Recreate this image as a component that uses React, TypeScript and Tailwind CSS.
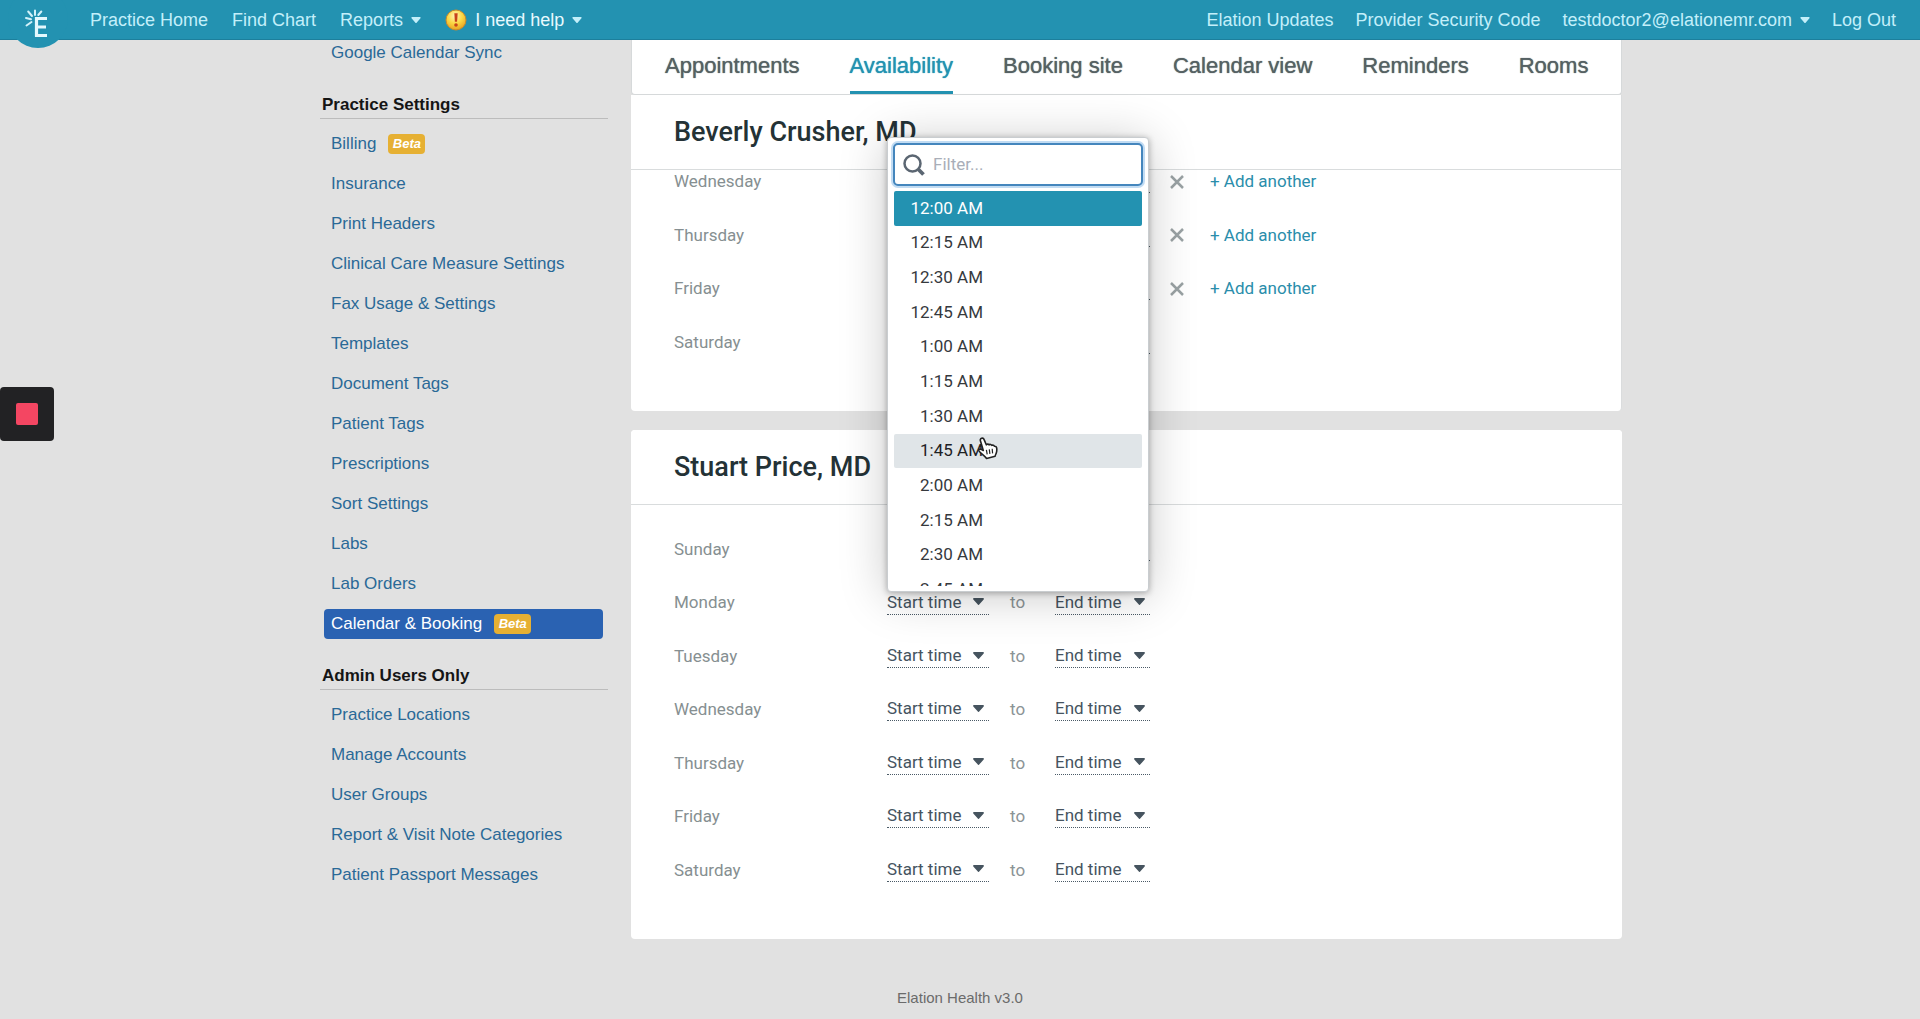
import React from "react";

const HELV = "font-['Liberation_Sans',Arial,sans-serif]";

const practiceLinks = [
  { label: "Billing", beta: true },
  { label: "Insurance" },
  { label: "Print Headers" },
  { label: "Clinical Care Measure Settings" },
  { label: "Fax Usage & Settings" },
  { label: "Templates" },
  { label: "Document Tags" },
  { label: "Patient Tags" },
  { label: "Prescriptions" },
  { label: "Sort Settings" },
  { label: "Labs" },
  { label: "Lab Orders" },
  { label: "Calendar & Booking", beta: true, active: true },
];

const adminLinks = [
  { label: "Practice Locations" },
  { label: "Manage Accounts" },
  { label: "User Groups" },
  { label: "Report & Visit Note Categories" },
  { label: "Patient Passport Messages" },
];

const tabs = ["Appointments", "Availability", "Booking site", "Calendar view", "Reminders", "Rooms"];

const times = [
  "12:00 AM", "12:15 AM", "12:30 AM", "12:45 AM",
  "1:00 AM", "1:15 AM", "1:30 AM", "1:45 AM",
  "2:00 AM", "2:15 AM", "2:30 AM", "2:45 AM",
];

function Caret({ className }: { className: string }) {
  return (
    <svg viewBox="0 0 11 7" className={className} fill="currentColor" aria-hidden="true">
      <path d="M.9 0h9.2c.7 0 1.1.8.6 1.4L6.2 6.6a.9.9 0 0 1-1.4 0L.3 1.4C-.2.8.2 0 .9 0z" />
    </svg>
  );
}

function Logo() {
  return (
    <a href="#" aria-label="Elation" className="absolute -top-3 left-2 block h-[60px] w-[60px] rounded-full bg-[#2392b1]">
      <svg viewBox="8 -12 60 60" className="h-full w-full" aria-hidden="true">
        <path d="M36.500 17v19.500M35 18.500h12M35 27h11M35 35.500h12" stroke="#e4f8fd" strokeWidth="3.200" fill="none" />
        <path
          d="M35 15v-4.500M38.300 15l3-3.500M32 16l-3.800-4.500M31 19.200l-5-1.200M31.500 22l-5 3.500"
          stroke="#d3f2fa"
          strokeWidth="2"
          strokeLinecap="round"
        />
      </svg>
    </a>
  );
}

function AlertBall() {
  return (
    <svg viewBox="0 0 22 22" className="h-[22px] w-[22px]" aria-hidden="true">
      <defs>
        <radialGradient id="ball" cx="45%" cy="30%" r="75%">
          <stop offset="0" stopColor="#fff6b8" />
          <stop offset="0.5" stopColor="#fbd743" />
          <stop offset="1" stopColor="#e59a1c" />
        </radialGradient>
      </defs>
      <circle cx="11" cy="11" r="10" fill="url(#ball)" stroke="#c98a2b" />
      <path d="M9.300 4.200h3.400l-.6 8.600H9.900z" fill="#c8431b" />
      <circle cx="11" cy="16" r="1.800" fill="#c8431b" />
    </svg>
  );
}

function TopBar() {
  return (
    <header
      className={`${HELV} fixed inset-x-0 top-0 z-30 flex h-10 items-center justify-between border-b border-[#1c7f9c] bg-[#2392b1] pt-px pr-6 pl-[90px] text-[18px] text-[#c3effa]`}
    >
      <Logo />
      <nav className="flex items-center gap-6" aria-label="Main">
        <a href="#">Practice Home</a>
        <a href="#">Find Chart</a>
        <button className="flex items-center gap-2">
          Reports <Caret className="h-1.5 w-2.5" />
        </button>
        <button className="flex items-center gap-2 text-[#e8fafe]">
          <AlertBall /> I need help <Caret className="h-1.5 w-2.5 text-[#c3effa]" />
        </button>
      </nav>
      <nav className="flex items-center gap-[22px]" aria-label="Account">
        <a href="#">Elation Updates</a>
        <a href="#">Provider Security Code</a>
        <button className="flex items-center gap-2">
          testdoctor2@elationemr.com <Caret className="h-1.5 w-2.5" />
        </button>
        <a href="#">Log Out</a>
      </nav>
    </header>
  );
}

function SideLink({ label, beta, active }: { label: string; beta?: boolean; active?: boolean }) {
  return (
    <li className="flex h-10 items-center">
      <a
        href="#"
        className={
          active
            ? "mr-[5px] ml-1 flex h-[30px] flex-1 items-center gap-3 rounded-[4px] bg-[#2a62b2] pl-[7px] text-white"
            : "ml-1 flex h-[30px] items-center gap-3 pl-[7px]"
        }
      >
        {label}
        {beta && (
          <span className="flex h-5 w-[37px] items-center justify-center rounded-[4px] bg-[#e6b033] text-[13px] font-bold text-white italic">
            Beta
          </span>
        )}
      </a>
    </li>
  );
}

function SideHeading({ children }: { children: React.ReactNode }) {
  return (
    <h2 className="mt-[19px] mb-[5px] border-b border-[#bcbcbc] pl-0.5 text-[17px] leading-[26px] font-bold text-[#151515]">
      {children}
    </h2>
  );
}

function Sidebar() {
  return (
    <aside className={`${HELV} w-72 shrink-0 text-[17px] text-[#2a6997]`}>
      <ul>
        <SideLink label="Google Calendar Sync" />
      </ul>
      <SideHeading>Practice Settings</SideHeading>
      <ul>
        {practiceLinks.map((l) => (
          <SideLink key={l.label} {...l} />
        ))}
      </ul>
      <SideHeading>Admin Users Only</SideHeading>
      <ul>
        {adminLinks.map((l) => (
          <SideLink key={l.label} {...l} />
        ))}
      </ul>
    </aside>
  );
}

function TimeSelect({ label, name, className }: { label: string; name: string; className: string }) {
  return (
    <span className={`relative flex items-center border-b border-dotted border-[#4a5a66] pb-0.5 text-[#46545f] ${className}`}>
      <select aria-label={name} className="w-full cursor-pointer appearance-none bg-transparent leading-5 outline-none">
        <option>{label}</option>
      </select>
      <Caret className="pointer-events-none absolute right-[5px] h-[7px] w-[11px]" />
    </span>
  );
}

function DayRow({ day, owner, filled }: { day: string; owner: string; filled?: boolean }) {
  return (
    <li className="flex items-center">
      <span className="w-[213px] text-[#868f91]">{day}</span>
      <TimeSelect label="Start time" name={`${owner} ${day} start`} className="w-[102px]" />
      <span className="w-[66px] pl-[21px] text-[#8b9496]">to</span>
      <TimeSelect label="End time" name={`${owner} ${day} end`} className="w-[95px]" />
      {filled && (
        <>
          <button aria-label={`Remove ${day} hours`} className="ml-5 text-[#9aa2a4]">
            <svg viewBox="0 0 14 14" className="h-3.5 w-3.5" stroke="currentColor" strokeWidth="2.500" aria-hidden="true">
              <path d="M1 1l12 12M13 1L1 13" />
            </svg>
          </button>
          <button className="ml-[26px] text-[#2a8dab]">+ Add another</button>
        </>
      )}
    </li>
  );
}

function ProviderTitle({ children }: { children: React.ReactNode }) {
  return (
    <h3 className="relative border-b border-[#d9dcdd] bg-white px-[43px] py-5 text-[27px] leading-[34px] font-medium text-[#243236]">
      {children}
    </h3>
  );
}

function TimeMenu() {
  return (
    <div className="absolute top-[104px] left-64 z-10 w-[262px] rounded-[4px] border border-[#c9cdd0] bg-white px-[5px] pt-[5px] pb-[5px] shadow-[0_4px_48px_rgba(0,0,0,0.22),0_1px_6px_rgba(0,0,0,0.3)]">
      <label className="flex h-[43px] items-center gap-2 rounded-[5px] border-2 border-[#4586bd] bg-white pl-2 shadow-[0_0_0_2px_#c2dcf3]">
        <svg viewBox="0 0 22 22" className="h-[22px] w-[22px] shrink-0" fill="none" stroke="#5b6672" strokeWidth="2.500" aria-hidden="true">
          <circle cx="9.500" cy="9.500" r="8" />
          <path d="M15.500 15.500l5 5" strokeWidth="3.800" />
        </svg>
        <input
          type="text"
          aria-label="Filter times"
          placeholder="Filter..."
          className="w-full min-w-0 bg-transparent text-[17px] text-[#333b44] outline-none placeholder:text-[#a9aeb8]"
        />
      </label>
      <div className="mx-px mt-[5px] h-[395px] overflow-hidden">
        <ul role="listbox" aria-label="Start time" className="grid min-h-[416px] auto-rows-fr text-[17px] text-[#36393d]">
          {times.map((t) => (
            <li
              key={t}
              role="option"
              aria-selected={t === "12:00 AM"}
              className={
                t === "12:00 AM"
                  ? "flex items-center rounded-[2px] bg-[#2392b1] pl-4 text-white"
                  : t === "1:45 AM"
                    ? "flex items-center rounded-[2px] bg-[#e0e5e8] pl-4 text-[#1e2124]"
                    : "flex items-center pl-4"
              }
            >
              <span className="w-[73px] text-right">{t}</span>
            </li>
          ))}
        </ul>
      </div>
    </div>
  );
}

function HandCursor() {
  return (
    <svg viewBox="0 0 21 23" className="absolute top-[404px] left-[346px] z-20 h-[23px] w-[21px]" aria-hidden="true">
      <path
        d="M4.600 1.300c1.100-.4 2 .1 2.400 1.100l2.300 5.400c.6-.9 2.100-.9 2.700 0 .8-.7 2.300-.4 2.800.5.900-.5 2.200 0 2.600.9 1.100-.1 2 .5 2.200 1.500.4 2 .2 3.800-.4 5.600-.4 1.200-1 1.800-1.100 3l-8.500 2.200c-1.500-2.400-3.600-3.600-5.900-5.700-1.500-1.300-2.500-2.300-1.800-3.200.9-1.100 2.600-.3 4.400.9L3.400 3.700c-.4-1 .1-2 1.200-2.400z"
        fill="#fff"
        stroke="#222"
        strokeWidth="1.600"
        strokeLinejoin="round"
      />
      <path d="M9.400 12.800l.8 4.600M12.300 12.300l.6 4.600M15.200 11.800l.4 4.600" stroke="#222" strokeWidth="1.200" />
    </svg>
  );
}

function Main() {
  return (
    <main className="relative min-w-0 flex-1 font-[Roboto,sans-serif] text-[17px]">
      <nav
        aria-label="Calendar settings"
        className={`${HELV} flex gap-[50px] rounded-b border border-t-0 border-[#d6d9da] bg-white pt-[19px] pl-[33px] text-[22px] leading-7 whitespace-nowrap text-[#556163] [text-shadow:0_0_1px_currentColor]`}
      >
        {tabs.map((t) => (
          <a
            key={t}
            href="#"
            className={
              t === "Availability"
                ? "border-b-3 border-[#2392b1] pb-[11px] text-[#2392b1]"
                : "border-b-3 border-transparent pb-[11px]"
            }
          >
            {t}
          </a>
        ))}
      </nav>

      <section className="overflow-hidden rounded-b border-r border-[#dadcdd] bg-white pb-[42px]">
        <ProviderTitle>Beverly Crusher, MD</ProviderTitle>
        <ul className="-mt-[15px] grid min-h-[214px] auto-rows-fr px-[43px]">
          {["Wednesday", "Thursday", "Friday"].map((d) => (
            <DayRow key={d} day={d} owner="Beverly Crusher" filled />
          ))}
          <DayRow day="Saturday" owner="Beverly Crusher" />
        </ul>
      </section>

      <section className="mt-[19px] overflow-hidden rounded bg-white pb-[42px]">
        <ProviderTitle>Stuart Price, MD</ProviderTitle>
        <ul className="mt-[18px] grid min-h-[374px] auto-rows-fr px-[43px]">
          {["Sunday", "Monday", "Tuesday", "Wednesday", "Thursday", "Friday", "Saturday"].map((d) => (
            <DayRow key={d} day={d} owner="Stuart Price" />
          ))}
        </ul>
      </section>

      <TimeMenu />
      <HandCursor />
    </main>
  );
}

export default function App() {
  return (
    <div className="min-h-screen bg-[#e1e1e1]">
      <TopBar />
      <div className="flex items-start gap-[23px] pt-[33px] pr-[298px] pl-80">
        <Sidebar />
        <Main />
      </div>
      <button aria-label="Stop recording" className="fixed top-[387px] left-0 flex h-[54px] w-[54px] items-center justify-center rounded-[4px] bg-[#222224]">
        <span className="h-[22px] w-[22px] rounded-[2px] bg-[#f44662]" />
      </button>
      <footer className={`${HELV} pt-12 pb-2.5 text-center text-[15px] leading-[22px] text-[#6b6b6b]`}>Elation Health v3.0</footer>
    </div>
  );
}
